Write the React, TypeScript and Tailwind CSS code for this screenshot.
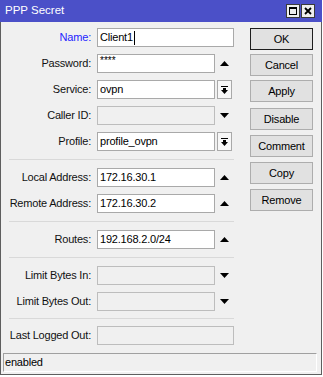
import React from "react";

const font = { fontFamily: '"Liberation Sans", Arial, sans-serif' };

function Up() {
  return (
    <svg width="9" height="5" viewBox="0 0 9 5" className="block">
      <polygon points="0,5 4.5,0 9,5" fill="#000" />
    </svg>
  );
}
function Down() {
  return (
    <svg width="9" height="5" viewBox="0 0 9 5" className="block">
      <polygon points="0,0 4.5,5 9,0" fill="#000" />
    </svg>
  );
}
function DropBtn() {
  return (
    <div className="w-[15px] h-[19px] border border-[#a9a9a9] bg-[#f7f7f7] flex items-center justify-center">
      <svg width="7" height="8" viewBox="0 0 7 8" className="block">
        <rect x="0" y="0" width="7" height="1" fill="#000" />
        <rect x="2" y="2" width="3" height="2" fill="#000" />
        <polygon points="0,4 3.5,8 7,4" fill="#000" />
      </svg>
    </div>
  );
}

type Row = {
  label: string;
  value?: string;
  blue?: boolean;
  wide?: boolean;
  disabled?: boolean;
  icon?: "up" | "down" | "drop" | null;
  cursor?: boolean;
  small?: boolean;
};

function FormRow({ r }: { r: Row }) {
  return (
    <div className="flex items-center h-[19px]">
      <div
        className={
          "w-[90px] text-right text-[11px] tracking-[-0.2px] leading-none " +
          (r.blue ? "text-[#2424ff]" : "text-[#111]")
        }
      >
        {r.label}
      </div>
      <div
        className={
          "ml-[6px] h-[19px] border flex items-center pl-[2px] text-[11px] tracking-[-0.2px] leading-none text-black " +
          (r.wide ? "w-[137px] " : "w-[118px] ") +
          (r.disabled ? "bg-[#f0f0f0] border-[#bdbdbd]" : "bg-white border-[#a9a9a9]")
        }
      >
        {r.small ? (
          <span className="text-[10px] -mt-[5px] tracking-[0px]">****</span>
        ) : (
          <span>{r.value}</span>
        )}
        {r.cursor && <span className="ml-[1px] w-[1px] h-[14px] bg-black" />}
      </div>
      {r.icon && (
        <div className="ml-[2px] w-[15px] h-[19px] flex items-center justify-center">
          {r.icon === "up" && <Up />}
          {r.icon === "down" && <Down />}
          {r.icon === "drop" && <DropBtn />}
        </div>
      )}
    </div>
  );
}

function Sep({ cls }: { cls: string }) {
  return <div className={"ml-[8px] w-[225px] h-[1px] bg-[#d9d9d9] " + cls} />;
}

function Btn({ label, def, cls }: { label: string; def?: boolean; cls?: string }) {
  return (
    <div
      className={
        "w-[63px] h-[22px] flex items-center justify-center text-[11px] tracking-[-0.2px] text-black leading-none bg-[#e1e1e1] border " +
        (def ? "border-[#1e1e1e] " : "border-[#adadad] ") +
        (cls || "")
      }
    >
      {label}
    </div>
  );
}

export default function App() {
  return (
    <div className="w-[323px] h-[377px] bg-white" style={font}>
      <div className="w-[322px] h-[375px] flex flex-col">
        <div className="h-[22px] bg-[#4b50c8] flex items-center pl-[5px] shrink-0">
          <span className="text-white text-[11.5px] leading-none">PPP Secret</span>
          <div className="ml-auto mr-[7px] flex gap-[1px]">
            <div className="w-[14px] h-[14px] bg-[#eeeeee] border border-[#3a3a3a] flex items-center justify-center">
              <svg width="8" height="8" viewBox="0 0 8 8" className="block">
                <rect x="0.5" y="0.5" width="7" height="7" fill="none" stroke="#000" strokeWidth="1" />
                <rect x="0" y="0" width="8" height="2" fill="#000" />
              </svg>
            </div>
            <div className="w-[14px] h-[14px] bg-[#eeeeee] border border-[#3a3a3a] flex items-center justify-center">
              <svg width="8" height="8" viewBox="0 0 8 8" className="block">
                <path d="M1 1 L7 7 M7 1 L1 7" stroke="#000" strokeWidth="1.8" />
              </svg>
            </div>
          </div>
        </div>
        <div className="flex-1 bg-[#f0f0f0] border-l border-r border-b border-[#5e5e5e] flex flex-col">
          <div className="flex pt-[6px]">
            <div className="w-[233px] flex flex-col">
              <div className="flex flex-col gap-[7px]">
                <FormRow r={{ label: "Name:", value: "Client1", blue: true, wide: true, cursor: true }} />
                <FormRow r={{ label: "Password:", small: true, icon: "up" }} />
                <FormRow r={{ label: "Service:", value: "ovpn", icon: "drop" }} />
                <FormRow r={{ label: "Caller ID:", disabled: true, icon: "down" }} />
                <FormRow r={{ label: "Profile:", value: "profile_ovpn", icon: "drop" }} />
              </div>
              <Sep cls="mt-[8px] mb-[8px]" />
              <div className="flex flex-col gap-[7px]">
                <FormRow r={{ label: "Local Address:", value: "172.16.30.1", icon: "up" }} />
                <FormRow r={{ label: "Remote Address:", value: "172.16.30.2", icon: "up" }} />
              </div>
              <Sep cls="mt-[8px] mb-[8px]" />
              <FormRow r={{ label: "Routes:", value: "192.168.2.0/24", icon: "up" }} />
              <Sep cls="mt-[8px] mb-[8px]" />
              <div className="flex flex-col gap-[7px]">
                <FormRow r={{ label: "Limit Bytes In:", disabled: true, icon: "down" }} />
                <FormRow r={{ label: "Limit Bytes Out:", disabled: true, icon: "down" }} />
              </div>
              <Sep cls="mt-[7px] mb-[7px]" />
              <FormRow r={{ label: "Last Logged Out:", disabled: true, wide: true }} />
            </div>
            <div className="ml-[16px] flex flex-col">
              <Btn label="OK" def />
              <Btn label="Cancel" cls="mt-[4px]" />
              <Btn label="Apply" cls="mt-[4px]" />
              <Btn label="Disable" cls="mt-[6px]" />
              <Btn label="Comment" cls="mt-[5px]" />
              <Btn label="Copy" cls="mt-[5px]" />
              <Btn label="Remove" cls="mt-[5px]" />
            </div>
          </div>
          <div className="mt-auto mb-[2px] ml-[2px] w-[314px] h-[19px] border-t border-l border-[#a0a0a0] border-b border-r border-b-white border-r-white flex items-center pl-[1px] text-[11px] tracking-[-0.2px] leading-none text-black">
            enabled
          </div>
        </div>
      </div>
    </div>
  );
}
